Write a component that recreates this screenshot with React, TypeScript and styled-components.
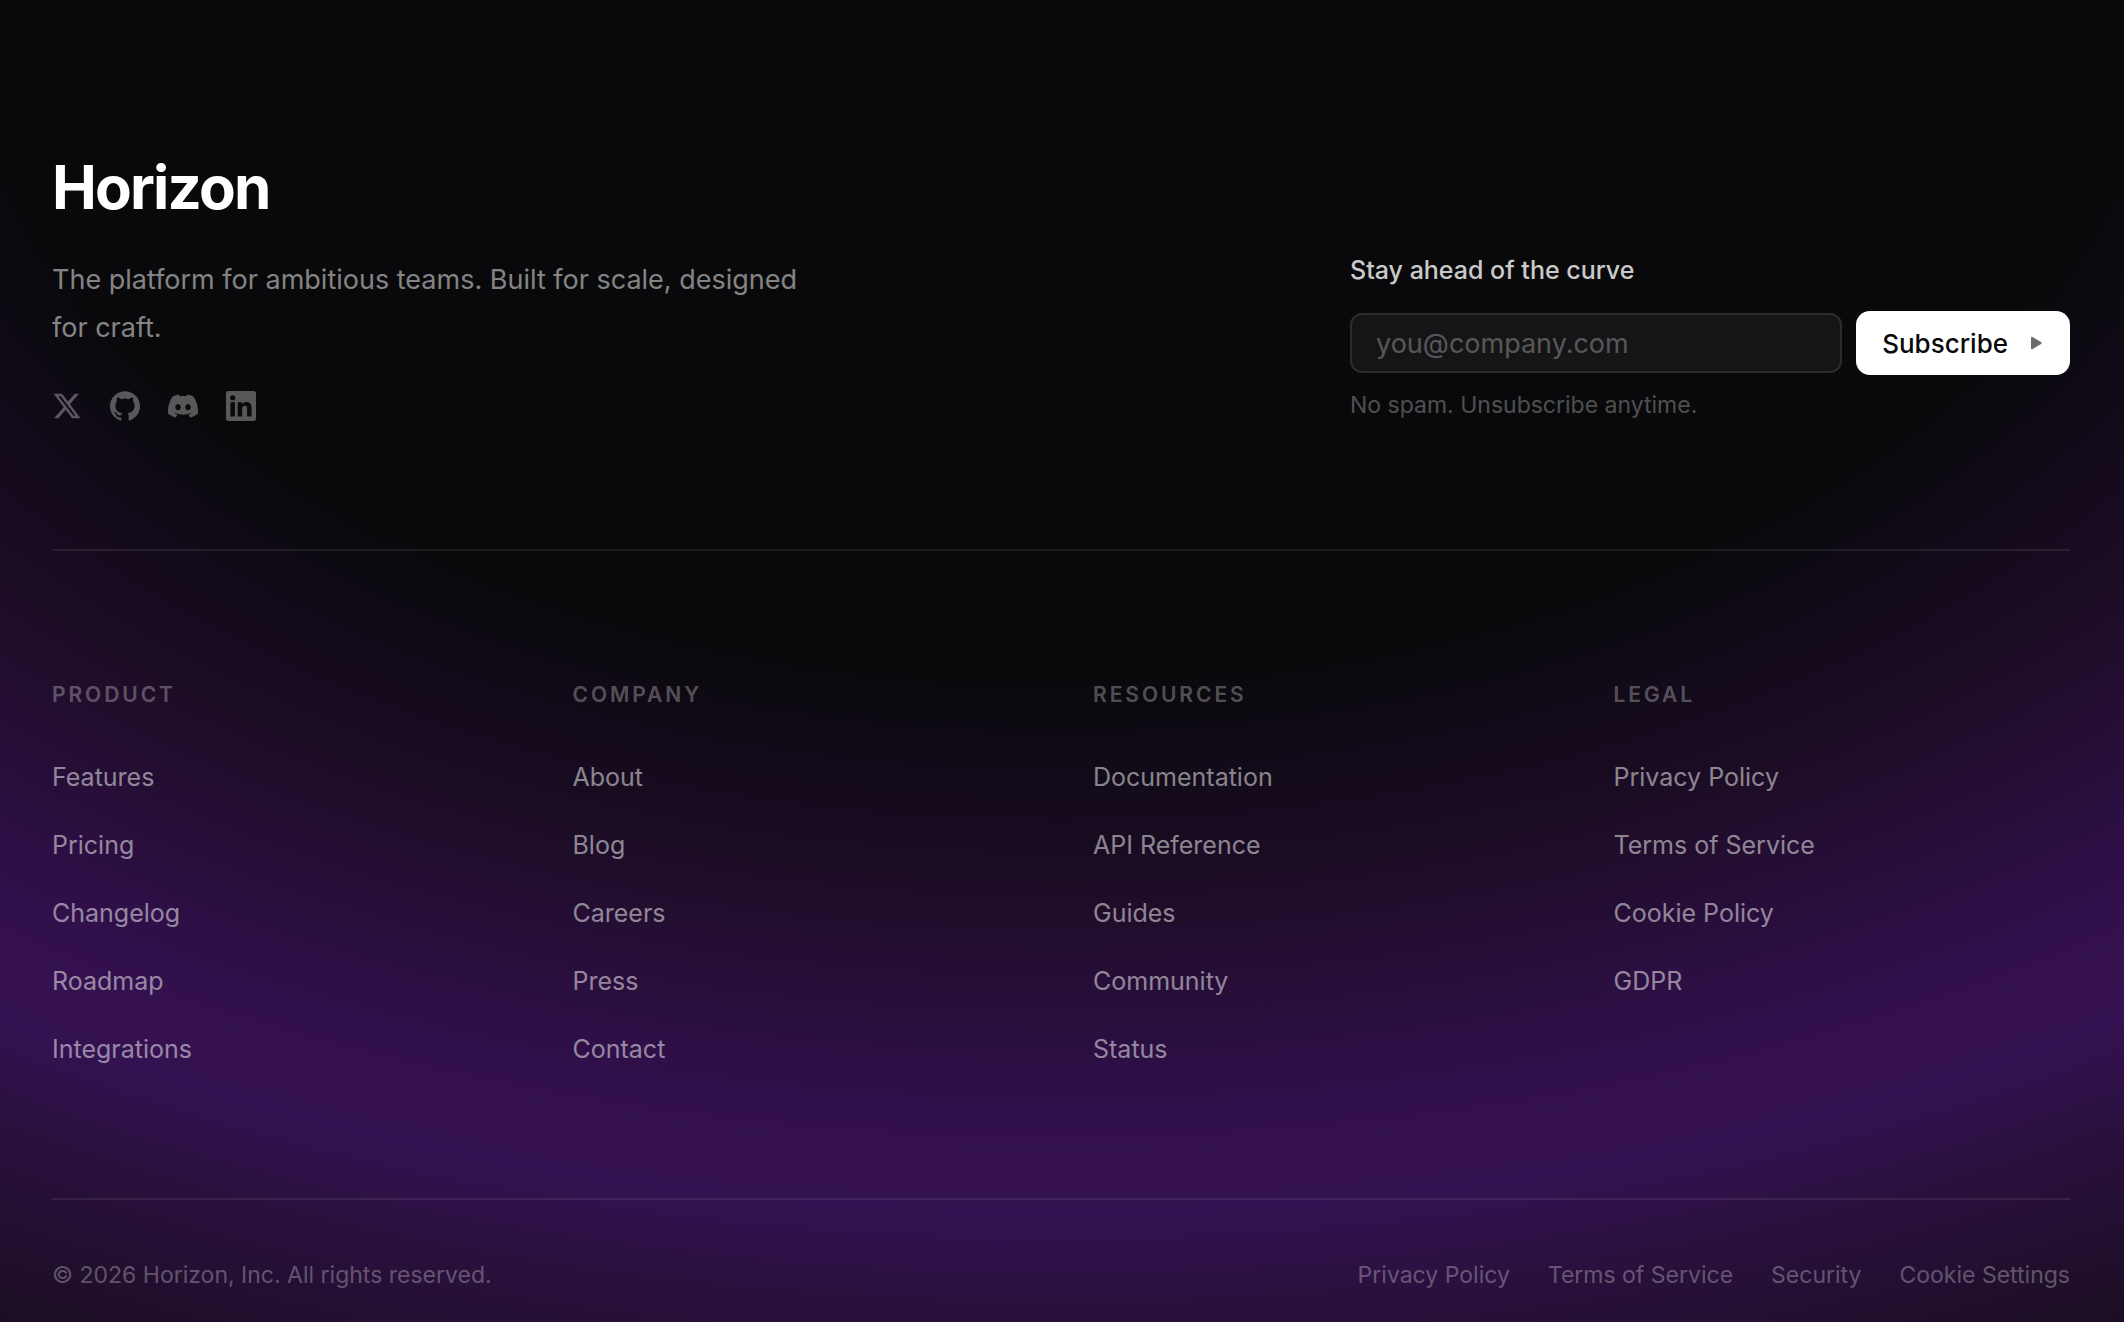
import React from "react";
import styled, { createGlobalStyle } from "styled-components";

const GlobalStyle = createGlobalStyle`
  *, *::before, *::after { box-sizing: border-box; }
  body {
    margin: 0;
    background: #09090b;
    color: #fff;
    font-family: Inter, "Liberation Sans", sans-serif;
    -webkit-font-smoothing: antialiased;
  }
  h2, h3, p, ul { margin: 0; padding: 0; }
  ul { list-style: none; }
`;

const Footer = styled.footer`
  min-height: 100vh;
  padding: 155px 54px 31px 52px;
  background: radial-gradient(
    100% 100% at 50% 0%,
    #09090b 51%,
    #100a16 57%,
    #1f0d2a 69%,
    #2f0f48 82%,
    #351150 88%,
    #341150 92%,
    #28103b 100%,
    #1c0e25 111%,
    #09090b 126%
  );
`;

const Top = styled.section`
  display: flex;
  justify-content: space-between;
  align-items: flex-end;
  gap: 64px;
  padding-bottom: 128px;
  border-bottom: 2px solid rgba(255, 255, 255, 0.08);
`;

const Brand = styled.div`
  max-width: 768px;
`;

const Wordmark = styled.h2`
  margin-bottom: 37px;
  font-size: 60px;
  line-height: 64px;
  font-weight: 700;
  letter-spacing: -0.03em;
`;

const Tagline = styled.p`
  margin-bottom: 39px;
  font-size: 27px;
  line-height: 48px;
  color: rgba(255, 255, 255, 0.5);
`;

const Socials = styled.ul`
  display: flex;
  gap: 28px;
`;

const SocialLink = styled.a`
  display: block;
  color: rgba(255, 255, 255, 0.32);

  svg {
    display: block;
    width: 30px;
    height: 30px;
    fill: currentColor;
  }
`;

const Newsletter = styled.form`
  flex: 0 1 720px;
`;

const NewsletterLabel = styled.label`
  display: block;
  margin-bottom: 24px;
  font-size: 25px;
  line-height: 34px;
  font-weight: 500;
  color: rgba(255, 255, 255, 0.8);
`;

const Fields = styled.div`
  display: flex;
  align-items: center;
  gap: 14px;
  margin-bottom: 14px;
`;

const EmailInput = styled.input`
  flex: 1;
  min-width: 0;
  height: 60px;
  padding: 0 24px;
  border: 2px solid rgba(255, 255, 255, 0.1);
  border-radius: 12px;
  background: rgba(255, 255, 255, 0.05);
  color: #fff;
  font: inherit;
  font-size: 27px;

  &::placeholder {
    color: rgba(255, 255, 255, 0.3);
    opacity: 1;
  }
`;

const SubscribeButton = styled.button`
  display: flex;
  align-items: center;
  gap: 22px;
  height: 64px;
  padding: 0 28px 0 26px;
  border: 0;
  border-radius: 14px;
  background: #fff;
  color: #09090b;
  font: inherit;
  font-size: 26px;
  font-weight: 500;

  svg {
    width: 12px;
    height: 14px;
    fill: #6b6b6b;
  }
`;

const Note = styled.p`
  font-size: 23px;
  line-height: 32px;
  color: rgba(255, 255, 255, 0.3);
`;

const Columns = styled.nav`
  display: grid;
  grid-template-columns: repeat(4, 1fr);
  gap: 64px;
  padding: 130px 0 131px;
  border-bottom: 2px solid rgba(255, 255, 255, 0.08);
`;

const ColumnTitle = styled.h3`
  margin-bottom: 50px;
  font-size: 21px;
  line-height: 28px;
  font-weight: 600;
  letter-spacing: 0.14em;
  text-transform: uppercase;
  color: rgba(255, 255, 255, 0.3);
`;

const ColumnLinks = styled.ul`
  display: grid;
  gap: 32px;
`;

const ColumnLink = styled.a`
  display: block;
  font-size: 25px;
  line-height: 36px;
  color: rgba(255, 255, 255, 0.5);
  text-decoration: none;
`;

const Bottom = styled.div`
  display: flex;
  justify-content: space-between;
  padding-top: 59px;
  font-size: 23px;
  line-height: 32px;
  color: rgba(255, 255, 255, 0.3);
`;

const LegalLinks = styled.ul`
  display: flex;
  gap: 38px;
`;

const LegalLink = styled.a`
  color: inherit;
  text-decoration: none;
`;

const socials = [
  {
    name: "X",
    path: "M18.244 2.25h3.308l-7.227 8.26 8.502 11.24H16.17l-5.214-6.817L4.99 21.75H1.68l7.73-8.835L1.254 2.25H8.08l4.713 6.231zm-1.161 17.52h1.833L7.084 4.126H5.117z",
  },
  {
    name: "GitHub",
    path: "M12 .297c-6.63 0-12 5.373-12 12 0 5.303 3.438 9.8 8.205 11.385.6.113.82-.258.82-.577 0-.285-.01-1.04-.015-2.04-3.338.724-4.042-1.61-4.042-1.61C4.422 18.07 3.633 17.7 3.633 17.7c-1.087-.744.084-.729.084-.729 1.205.084 1.838 1.236 1.838 1.236 1.07 1.835 2.809 1.305 3.495.998.108-.776.417-1.305.76-1.605-2.665-.3-5.466-1.332-5.466-5.93 0-1.31.465-2.38 1.235-3.22-.135-.303-.54-1.523.105-3.176 0 0 1.005-.322 3.3 1.23.96-.267 1.98-.399 3-.405 1.02.006 2.04.138 3 .405 2.28-1.552 3.285-1.23 3.285-1.23.645 1.653.24 2.873.12 3.176.765.84 1.23 1.91 1.23 3.22 0 4.61-2.805 5.625-5.475 5.92.42.36.81 1.096.81 2.22 0 1.606-.015 2.896-.015 3.286 0 .315.21.69.825.57C20.565 22.092 24 17.592 24 12.297c0-6.627-5.373-12-12-12",
  },
  {
    name: "Discord",
    path: "M20.317 4.3698a19.7913 19.7913 0 00-4.8851-1.5152.0741.0741 0 00-.0785.0371c-.211.3753-.4447.8648-.6083 1.2495-1.8447-.2762-3.68-.2762-5.4868 0-.1636-.3933-.4058-.8742-.6177-1.2495a.077.077 0 00-.0785-.037 19.7363 19.7363 0 00-4.8852 1.515.0699.0699 0 00-.0321.0277C.5334 9.0458-.319 13.5799.0992 18.0578a.0824.0824 0 00.0312.0561c2.0528 1.5076 4.0413 2.4228 5.9929 3.0294a.0777.0777 0 00.0842-.0276c.4616-.6304.8731-1.2952 1.226-1.9942a.076.076 0 00-.0416-.1057c-.6528-.2476-1.2743-.5495-1.8722-.8923a.077.077 0 01-.0076-.1277c.1258-.0943.2517-.1923.3718-.2914a.0743.0743 0 01.0776-.0105c3.9278 1.7933 8.18 1.7933 12.0614 0a.0739.0739 0 01.0785.0095c.1202.099.246.1981.3728.2924a.077.077 0 01-.0066.1276 12.2986 12.2986 0 01-1.873.8914.0766.0766 0 00-.0407.1067c.3604.698.7719 1.3628 1.225 1.9932a.076.076 0 00.0842.0286c1.961-.6067 3.9495-1.5219 6.0023-3.0294a.077.077 0 00.0313-.0552c.5004-5.177-.8382-9.6739-3.5485-13.6604a.061.061 0 00-.0312-.0286zM8.02 15.3312c-1.1825 0-2.1569-1.0857-2.1569-2.419 0-1.3332.9555-2.4189 2.157-2.4189 1.2108 0 2.1757 1.0952 2.1568 2.419 0 1.3332-.9555 2.4189-2.1569 2.4189zm7.9748 0c-1.1825 0-2.1569-1.0857-2.1569-2.419 0-1.3332.9554-2.4189 2.1569-2.4189 1.2108 0 2.1757 1.0952 2.1568 2.419 0 1.3332-.946 2.4189-2.1568 2.4189z",
  },
  {
    name: "LinkedIn",
    path: "M20.447 20.452h-3.554v-5.569c0-1.328-.027-3.037-1.852-3.037-1.853 0-2.136 1.445-2.136 2.939v5.667H9.351V9h3.414v1.561h.046c.477-.9 1.637-1.85 3.37-1.85 3.601 0 4.267 2.37 4.267 5.455v6.286zM5.337 7.433a2.062 2.062 0 01-2.063-2.065 2.064 2.064 0 112.063 2.065zm1.782 13.019H3.555V9h3.564v11.452zM22.225 0H1.771C.792 0 0 .774 0 1.729v20.542C0 23.227.792 24 1.771 24h20.451C23.2 24 24 23.227 24 22.271V1.729C24 .774 23.2 0 22.222 0h.003z",
  },
];

const columns = [
  { title: "Product", links: ["Features", "Pricing", "Changelog", "Roadmap", "Integrations"] },
  { title: "Company", links: ["About", "Blog", "Careers", "Press", "Contact"] },
  { title: "Resources", links: ["Documentation", "API Reference", "Guides", "Community", "Status"] },
  { title: "Legal", links: ["Privacy Policy", "Terms of Service", "Cookie Policy", "GDPR"] },
];

const legal = ["Privacy Policy", "Terms of Service", "Security", "Cookie Settings"];

export default function App() {
  return (
    <>
      <GlobalStyle />
      <Footer>
        <Top>
          <Brand>
            <Wordmark>Horizon</Wordmark>
            <Tagline>
              The platform for ambitious teams. Built for scale, designed for craft.
            </Tagline>
            <Socials>
              {socials.map((s) => (
                <li key={s.name}>
                  <SocialLink href="#" aria-label={s.name}>
                    <svg viewBox="0 0 24 24" aria-hidden="true">
                      <path d={s.path} />
                    </svg>
                  </SocialLink>
                </li>
              ))}
            </Socials>
          </Brand>
          <Newsletter onSubmit={(e) => e.preventDefault()}>
            <NewsletterLabel htmlFor="email">Stay ahead of the curve</NewsletterLabel>
            <Fields>
              <EmailInput id="email" type="email" placeholder="you@company.com" />
              <SubscribeButton type="submit">
                Subscribe
                <svg viewBox="0 0 12 14" aria-hidden="true">
                  <path d="M1 2Q1 .2 2.600 1L11 6Q12.400 7 11 8L2.600 13Q1 13.800 1 12Z" />
                </svg>
              </SubscribeButton>
            </Fields>
            <Note>No spam. Unsubscribe anytime.</Note>
          </Newsletter>
        </Top>
        <Columns aria-label="Footer">
          {columns.map((c) => (
            <div key={c.title}>
              <ColumnTitle>{c.title}</ColumnTitle>
              <ColumnLinks>
                {c.links.map((l) => (
                  <li key={l}>
                    <ColumnLink href="#">{l}</ColumnLink>
                  </li>
                ))}
              </ColumnLinks>
            </div>
          ))}
        </Columns>
        <Bottom>
          <p>© 2026 Horizon, Inc. All rights reserved.</p>
          <LegalLinks>
            {legal.map((l) => (
              <li key={l}>
                <LegalLink href="#">{l}</LegalLink>
              </li>
            ))}
          </LegalLinks>
        </Bottom>
      </Footer>
    </>
  );
}
